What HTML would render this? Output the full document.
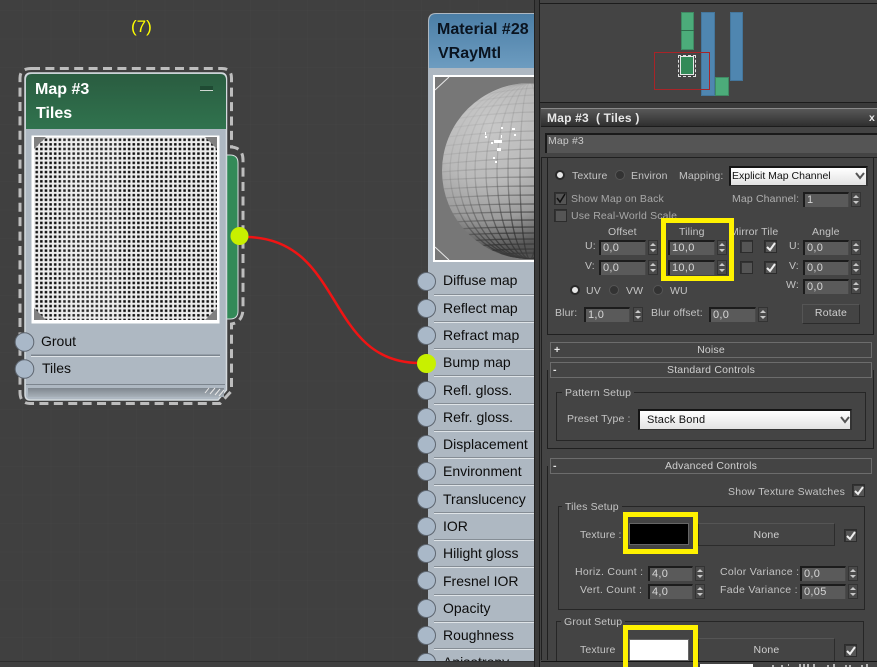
<!DOCTYPE html>
<html><head><meta charset="utf-8">
<style>
html,body{margin:0;padding:0;width:877px;height:667px;overflow:hidden;background:#404040}
body{position:relative;font-family:"Liberation Sans",sans-serif}
div,span,select{box-sizing:border-box}
.a{position:absolute}
.t{position:absolute;white-space:nowrap;font-size:10.5px;line-height:14px;color:#c4c4c4;letter-spacing:.15px}
.n{position:absolute;white-space:nowrap;font-size:14px;line-height:18px;color:#0c0c0c;left:443px;letter-spacing:0}
.s{position:absolute;width:19px;height:19px;border-radius:50%;background:#a9b8c8;border:1px solid #5e6670;left:417px}
.r{position:absolute;left:434px;width:100px;height:2px;background:linear-gradient(#858d95 50%,#dfe4e8 50%)}
.i{position:absolute;height:15px;background:#5a5a5a;border-top:2px solid #1c1c1c;border-left:2px solid #1c1c1c;border-right:1px solid #4a4a4a;font-size:11px;line-height:13px;color:#d6d6d6;padding-left:2px;letter-spacing:.3px;white-space:nowrap;overflow:hidden}
.p{position:absolute;width:10px;height:15px;background:#4a4a4a;border:1px solid #333}
.p:before,.p:after{content:"";position:absolute;left:1px;border-left:3px solid transparent;border-right:3px solid transparent}
.p:before{top:2px;border-bottom:3px solid #c8c8c8}
.p:after{bottom:2px;border-top:3px solid #c8c8c8}
.c{position:absolute;width:13px;height:13px;background:#555;border:1px solid #2c2c2c;box-shadow:inset 1px 1px 0 #333}
.c svg{position:absolute;left:0;top:0}
.b{position:absolute;border:1px solid #262626;background:transparent}
.bar{position:absolute;left:550px;width:322px;height:16px;border:1px solid #6c6c6c;background:#444;color:#d0d0d0;font-size:10.5px;line-height:14px;text-align:center;letter-spacing:.2px}
.y{position:absolute;border:5px solid #fff200}
.rd{position:absolute;width:10px;height:10px;border-radius:50%;background:#333;border:1px solid #555}
.rd.on{background:#e8e8e8;border:2px solid #2a2a2a}
</style></head>
<body>
<!-- canvas -->
<div class="a" style="left:0;top:0;width:534px;height:667px;background-color:#404040;background-image:linear-gradient(90deg,rgba(255,255,255,.012) 1px,transparent 1px),linear-gradient(rgba(255,255,255,.012) 1px,transparent 1px);background-size:28.5px 28.5px;background-position:22px 10px"></div>
<div class="a" style="left:131px;top:18px;color:#ffff00;font-size:17px;line-height:18px">(7)</div>

<!-- left node -->
<svg class="a" style="left:0;top:0" width="534" height="667" viewBox="0 0 534 667">
<defs>
<pattern id="tile" x="34" y="137" width="4.62" height="4.62" patternUnits="userSpaceOnUse">
<rect width="4.62" height="4.62" fill="#ececec"/><rect x="1.5" y="1.5" width="2.5" height="2.5" fill="#111"/>
</pattern>
<radialGradient id="sph" gradientUnits="userSpaceOnUse" cx="490" cy="125" r="125">
<stop offset="0" stop-color="#c8c8c8"/><stop offset=".45" stop-color="#bababa"/><stop offset=".75" stop-color="#9c9c9c"/><stop offset="1" stop-color="#555"/>
</radialGradient>
<linearGradient id="ls" gradientUnits="userSpaceOnUse" x1="450" y1="110" x2="534" y2="215"><stop offset="0" stop-color="#888" stop-opacity=".06"/><stop offset=".5" stop-color="#666" stop-opacity=".28"/><stop offset="1" stop-color="#333" stop-opacity=".75"/></linearGradient>
<clipPath id="sc"><rect x="435" y="77" width="99" height="184"/></clipPath>
<clipPath id="sc2"><circle cx="530" cy="171" r="88"/></clipPath>
<linearGradient id="hg" x1="0" y1="0" x2="0" y2="1"><stop offset="0" stop-color="#2a5c40"/><stop offset="1" stop-color="#30734e"/></linearGradient>
<linearGradient id="bg2" x1="0" y1="0" x2="0" y2="1"><stop offset="0" stop-color="#4b7ea6"/><stop offset="1" stop-color="#6d9cc0"/></linearGradient>
<linearGradient id="gr" x1="0" y1="0" x2="0" y2="1"><stop offset="0" stop-color="#7f878f"/><stop offset="1" stop-color="#a7b0b8"/></linearGradient>
</defs>
<path d="M31 68.500H222Q231.500 68.500 231.500 78V147Q243 148 243 160V308Q243 322 231.500 324V391L220 403.500H30Q20 403.500 20 392V78Q20 68.500 31 68.500Z" fill="none" stroke="#bdbdbd" stroke-width="3" stroke-dasharray="9 5.400"/>
<path d="M226 155H230Q238 155 238 163V311Q238 319 230 319H226Z" fill="#338a58" stroke="#d8dde0" stroke-width="1"/>
<path d="M31 73H221Q226.500 73 226.500 79V390L218 400H30Q25 400 25 394V79Q25 73 31 73Z" fill="#aeb8c2" stroke="#d4dade" stroke-width="1.500"/>
<path d="M32 74H220Q226 74 226 80V129H26V80Q26 74 32 74Z" fill="url(#hg)"/>
<rect x="200" y="86" width="13" height="4" fill="#1f4a33"/><rect x="200" y="90" width="13" height="1" fill="#cfd8d2"/>
<rect x="31.500" y="135.500" width="188" height="188" fill="#fff"/>
<rect x="34" y="137" width="183" height="183" fill="url(#tile)"/>
<rect x="60" y="137" width="60" height="183" fill="#fff" opacity=".1"/>
<path d="M34 137H46L34 149Z M217 137H205L217 149Z M34 320H46L34 308Z M217 320H205L217 308Z" fill="#808080"/>
<rect x="31" y="354.500" width="189" height="1.500" fill="#7c858e"/><rect x="31" y="356" width="189" height="1" fill="#dfe4e8"/>
<rect x="26" y="384" width="199" height="1" fill="#7c858e"/>
<rect x="28" y="388" width="196" height="9" fill="url(#gr)"/>
<path d="M205 393L209 388M210 394L215 388M215 395L220 389M219 396L224 390" stroke="#e8e8e8" stroke-width="1" fill="none"/>
<circle cx="24.500" cy="342" r="9.300" fill="#a9b8c8" stroke="#5e6670"/>
<circle cx="24.500" cy="369" r="9.300" fill="#a9b8c8" stroke="#5e6670"/>
<!-- wire -->
<path d="M248 237C345 240 325 363 420 363" fill="none" stroke="#f01414" stroke-width="2.500"/>
<circle cx="239.500" cy="236" r="9" fill="#c8f000"/>
<!-- material node -->
<path d="M534 13H436Q428 13 428 21V663H534Z" fill="#aeb8c2"/>
<path d="M534 14H436Q429 14 429 22V68H534Z" fill="url(#bg2)"/>
<rect x="433" y="75" width="101" height="187" fill="#fff"/>
<rect x="435" y="77" width="99" height="183" fill="#777"/>
<path d="M435 90L449 77M435 247L449 260" stroke="#e8e8e8" stroke-width="1"/>
<g clip-path="url(#sc)">
<circle cx="530" cy="171" r="88" fill="url(#sph)"/>
<g clip-path="url(#sc2)" fill="none" stroke="url(#ls)" stroke-width="1.300">
<ellipse cx="530" cy="171" rx="10" ry="88"/><ellipse cx="530" cy="171" rx="22" ry="88"/><ellipse cx="530" cy="171" rx="33" ry="88"/><ellipse cx="530" cy="171" rx="44" ry="88"/><ellipse cx="530" cy="171" rx="55" ry="88"/><ellipse cx="530" cy="171" rx="64" ry="88"/><ellipse cx="530" cy="171" rx="72" ry="88"/><ellipse cx="530" cy="171" rx="80" ry="88"/>
<path d="M440 172Q490 168 534 168M440 180Q490 177 534 177M441 189Q490 186 534 186M443 198Q490 195 534 195M445 206Q490 204 534 204M449 214Q490 212 534 212M453 222Q490 220 534 220M458 229Q490 227 534 227M463 235Q490 233 534 233M469 241Q490 239 534 239M476 246Q500 244 534 244M484 251Q505 249 534 249M492 255Q510 253 534 253"/>
<path d="M440 164Q490 159 534 158M441 155Q490 150 534 149M443 146Q490 141 534 140M446 137Q490 132 534 131M450 128Q490 122 534 121M455 119Q490 113 534 112M461 111Q495 104 534 103M469 103Q500 96 534 95M478 96Q505 90 534 88"/>
</g>
<path d="M442 225Q490 262 534 250V262H442Z" fill="#444" opacity=".3" clip-path="url(#sc2)"/>
<path d="M485 136h2v2h-2zM498 140h2v2h-2zM512 128h3v2h-3zM501 127h2v2h-2zM494 140h8v3h-8zM497 148h4v3h-4zM493 157h2v2h-2zM495 161h2v2h-2zM514 134h2v2h-2zM485 132h1v3h-1zM501 135h1v3h-1zM491 142h2v2h-2z" fill="#fff"/>
</g>
</svg>

<div class="a" style="left:35px;top:81px;color:#fff;font-size:16px;font-weight:bold;line-height:18px">Map #3</div>
<div class="a" style="left:36px;top:105px;color:#fff;font-size:16px;font-weight:bold;line-height:18px">Tiles</div>
<div class="a" style="left:437px;top:21px;color:#0a1420;font-size:16px;font-weight:bold;line-height:18px;white-space:nowrap;width:97px;overflow:hidden">Material #28</div>
<div class="a" style="left:438px;top:45px;color:#0a1420;font-size:16px;font-weight:bold;line-height:18px">VRayMtl</div>
<div class="n" style="left:41px;top:332px">Grout</div>
<div class="n" style="left:42px;top:359px">Tiles</div>

<div class="r" style="top:294px"></div><div class="r" style="top:321px"></div><div class="r" style="top:348px"></div><div class="r" style="top:375px"></div><div class="r" style="top:403px"></div><div class="r" style="top:430px"></div><div class="r" style="top:457px"></div><div class="r" style="top:484px"></div><div class="r" style="top:512px"></div><div class="r" style="top:539px"></div><div class="r" style="top:566px"></div><div class="r" style="top:594px"></div><div class="r" style="top:621px"></div><div class="r" style="top:648px"></div>

<div class="s" style="top:272px"></div><div class="s" style="top:299px"></div><div class="s" style="top:326px"></div>
<div class="s" style="top:354px;background:#c8f000;border-color:#c8f000"></div>
<div class="s" style="top:381px"></div><div class="s" style="top:408px"></div><div class="s" style="top:435px"></div><div class="s" style="top:462px"></div><div class="s" style="top:490px"></div><div class="s" style="top:517px"></div><div class="s" style="top:544px"></div><div class="s" style="top:571px"></div><div class="s" style="top:599px"></div><div class="s" style="top:626px"></div><div class="s" style="top:653px;height:9px;border-radius:10px 10px 0 0;border-bottom:0"></div>

<div class="n" style="top:271px">Diffuse map</div>
<div class="n" style="top:299px">Reflect map</div>
<div class="n" style="top:326px">Refract map</div>
<div class="n" style="top:353px">Bump map</div>
<div class="n" style="top:381px">Refl. gloss.</div>
<div class="n" style="top:408px">Refr. gloss.</div>
<div class="n" style="top:435px">Displacement</div>
<div class="n" style="top:462px">Environment</div>
<div class="n" style="top:490px">Translucency</div>
<div class="n" style="top:517px">IOR</div>
<div class="n" style="top:544px">Hilight gloss</div>
<div class="n" style="top:572px">Fresnel IOR</div>
<div class="n" style="top:599px">Opacity</div>
<div class="n" style="top:626px">Roughness</div>
<div class="a" style="left:434px;top:650px;width:100px;height:11px;overflow:hidden"><div class="n" style="left:9px;top:3px">Anisotropy</div></div>
<div class="a" style="left:0;top:661px;width:534px;height:6px;background:#404040;border-top:1px solid #2f2f2f"></div>

<!-- right panel -->
<div class="a" style="left:534px;top:0;width:343px;height:667px;background:#444"></div>
<div class="a" style="left:534px;top:0;width:5px;height:667px;background:#3a3a3a;border-left:1px solid #222"></div>
<div class="a" style="left:539px;top:0;width:1px;height:667px;background:#1c1c1c"></div>
<div class="a" style="left:540px;top:3px;width:337px;height:1px;background:#1c1c1c"></div>
<div class="a" style="left:540px;top:102px;width:337px;height:1px;background:#1c1c1c"></div>
<div class="a" style="left:540px;top:103px;width:337px;height:5px;background:#3a3a3a"></div>

<!-- minimap -->
<div class="a" style="left:681px;top:12px;width:13px;height:38px;background:#4cac7a;border:1px solid #3f8a63"></div>
<div class="a" style="left:681px;top:30px;width:13px;height:1px;background:#2d6e4c"></div>
<div class="a" style="left:701px;top:12px;width:14px;height:84px;background:#4f86b0;border:1px solid #44769c"></div>
<div class="a" style="left:730px;top:12px;width:13px;height:69px;background:#4f86b0;border:1px solid #44769c"></div>
<div class="a" style="left:715px;top:77px;width:14px;height:19px;background:#4cac7a;border:1px solid #3f8a63"></div>
<div class="a" style="left:654px;top:52px;width:56px;height:38px;border:1px solid #a82428"></div>
<div class="a" style="left:678px;top:55px;width:18px;height:22px;border:1px dashed #e0e0e0"></div>
<div class="a" style="left:680px;top:56px;width:14px;height:19px;background:#338a58;border:1px solid #e8e8e8"></div>

<!-- title -->
<div class="a" style="left:541px;top:108px;width:336px;height:19px;background:linear-gradient(#585858,#2f2f2f);border-top:1px solid #8a8a8a;border-bottom:1px solid #1c1c1c"></div>
<div class="t" style="left:547px;top:111px;font-weight:bold;font-size:12px;color:#e8e8e8;letter-spacing:.2px;white-space:pre">Map #3  ( Tiles )</div>
<div class="t" style="left:869px;top:111px;font-weight:bold;color:#e8e8e8">x</div>
<div class="a" style="left:545px;top:133px;width:332px;height:20px;background:#555;border-top:2px solid #1a1a1a;border-left:2px solid #1a1a1a"></div>
<div class="t" style="left:548px;top:134px;color:#c8c8c8">Map #3</div>

<!-- outer lines -->
<div class="a" style="left:541px;top:157px;width:1px;height:503px;background:#202020"></div>
<div class="a" style="left:547px;top:158px;width:1px;height:176px;background:#202020"></div>
<div class="a" style="left:547px;top:334px;width:327px;height:1px;background:#202020"></div>
<div class="a" style="left:873px;top:158px;width:1px;height:176px;background:#202020"></div>
<div class="a" style="left:541px;top:157px;width:336px;height:1px;background:#202020"></div>

<!-- top params -->
<div class="rd on" style="left:555px;top:170px"></div><div class="t" style="left:572px;top:169px">Texture</div>
<div class="rd" style="left:615px;top:170px"></div><div class="t" style="left:631px;top:169px">Environ</div>
<div class="t" style="left:679px;top:169px">Mapping:</div>
<div class="a" style="left:729px;top:166px;width:139px;height:20px;background:linear-gradient(#fff,#e2e2e2);border-top:2px solid #141414;border-left:2px solid #141414;border-right:2px solid #333;border-bottom:1px solid #333;color:#111;font-size:10.5px;line-height:17px;padding-left:1px;white-space:nowrap">Explicit Map Channel</div>
<svg class="a" style="left:855px;top:172px" width="10" height="8"><path d="M1 1L5 6L9 1" fill="none" stroke="#555" stroke-width="2"/></svg>

<div class="c" style="left:554px;top:192px"><svg width="12" height="12"><path d="M2 5L5 9L10 1" fill="none" stroke="#111" stroke-width="1.500"/></svg></div>
<div class="t" style="left:571px;top:192px;color:#a8a8a8">Show Map on Back</div>
<div class="t" style="left:732px;top:192px;color:#b0b0b0">Map Channel:</div>
<div class="i" style="left:803px;top:192px;width:46px">1</div><div class="p" style="left:851px;top:192px"></div>
<div class="c" style="left:554px;top:209px"></div>
<div class="t" style="left:571px;top:209px;color:#a8a8a8">Use Real-World Scale</div>

<div class="t" style="left:608px;top:225px">Offset</div>
<div class="t" style="left:679px;top:225px">Tiling</div>
<div class="t" style="left:730px;top:225px">Mirror Tile</div>
<div class="t" style="left:812px;top:225px">Angle</div>
<div class="t" style="left:585px;top:239px">U:</div><div class="t" style="left:585px;top:259px">V:</div>
<div class="i" style="left:599px;top:240px;width:47px">0,0</div><div class="p" style="left:648px;top:240px"></div>
<div class="i" style="left:599px;top:260px;width:47px">0,0</div><div class="p" style="left:648px;top:260px"></div>
<div class="i" style="left:668px;top:240px;width:47px">10,0</div><div class="p" style="left:717px;top:240px"></div>
<div class="i" style="left:668px;top:260px;width:47px">10,0</div><div class="p" style="left:717px;top:260px"></div>
<div class="c" style="left:740px;top:240px"></div><div class="c" style="left:740px;top:261px"></div>
<div class="c" style="left:764px;top:240px"><svg width="12" height="12"><path d="M2 6L5 9L10 2" fill="none" stroke="#eee" stroke-width="2"/></svg></div>
<div class="c" style="left:764px;top:261px"><svg width="12" height="12"><path d="M2 6L5 9L10 2" fill="none" stroke="#eee" stroke-width="2"/></svg></div>
<div class="t" style="left:789px;top:239px">U:</div><div class="t" style="left:789px;top:259px">V:</div><div class="t" style="left:786px;top:278px">W:</div>
<div class="i" style="left:803px;top:240px;width:46px">0,0</div><div class="p" style="left:851px;top:240px"></div>
<div class="i" style="left:803px;top:260px;width:46px">0,0</div><div class="p" style="left:851px;top:260px"></div>
<div class="i" style="left:803px;top:279px;width:46px">0,0</div><div class="p" style="left:851px;top:279px"></div>
<div class="y" style="left:661px;top:218px;width:73px;height:63px"></div>

<div class="rd on" style="left:570px;top:285px"></div><div class="t" style="left:586px;top:284px">UV</div>
<div class="rd" style="left:609px;top:285px"></div><div class="t" style="left:626px;top:284px">VW</div>
<div class="rd" style="left:653px;top:285px"></div><div class="t" style="left:670px;top:284px">WU</div>
<div class="t" style="left:555px;top:306px">Blur:</div>
<div class="i" style="left:584px;top:307px;width:46px">1,0</div><div class="p" style="left:633px;top:307px"></div>
<div class="t" style="left:651px;top:306px">Blur offset:</div>
<div class="i" style="left:709px;top:307px;width:47px">0,0</div><div class="p" style="left:758px;top:307px"></div>
<div class="a" style="left:802px;top:304px;width:58px;height:20px;border:1px solid #2c2c2c;border-top-color:#555;border-left-color:#555;color:#d0d0d0;font-size:10.5px;line-height:17px;text-align:center;letter-spacing:.2px">Rotate</div>

<!-- rollouts -->
<div class="bar" style="top:342px">Noise</div><div class="t" style="left:554px;top:343px;font-weight:bold;color:#e8e8e8">+</div>
<div class="bar" style="top:362px">Standard Controls</div><div class="t" style="left:553px;top:363px;font-weight:bold;color:#e8e8e8">-</div>
<div class="a" style="left:547px;top:370px;width:327px;height:79px;border:1px solid #202020;border-top:0;z-index:0"></div>
<div class="b" style="left:556px;top:392px;width:310px;height:49px"></div>
<div class="t" style="left:562px;top:386px;background:#444;padding:0 3px">Pattern Setup</div>
<div class="t" style="left:567px;top:412px">Preset Type :</div>
<div class="a" style="left:638px;top:409px;width:214px;height:21px;background:linear-gradient(#fff,#e2e2e2);border-top:2px solid #141414;border-left:2px solid #141414;border-right:2px solid #333;border-bottom:1px solid #333;color:#111;font-size:11px;line-height:18px;padding-left:7px;letter-spacing:.2px">Stack Bond</div>
<svg class="a" style="left:840px;top:416px" width="10" height="8"><path d="M1 1L5 6L9 1" fill="none" stroke="#555" stroke-width="2"/></svg>

<div class="bar" style="left:550px;top:458px">Advanced Controls</div><div class="t" style="left:553px;top:459px;font-weight:bold;color:#e8e8e8">-</div>
<div class="a" style="left:547px;top:466px;width:1px;height:194px;background:#202020"></div>
<div class="t" style="left:728px;top:485px;letter-spacing:.25px">Show Texture Swatches</div>
<div class="c" style="left:852px;top:484px"><svg width="12" height="12"><path d="M2 6L5 9L10 2" fill="none" stroke="#eee" stroke-width="2"/></svg></div>

<div class="b" style="left:558px;top:506px;width:307px;height:104px"></div>
<div class="t" style="left:562px;top:500px;background:#444;padding:0 3px">Tiles Setup</div>
<div class="t" style="left:580px;top:528px">Texture :</div>
<div class="a" style="left:629px;top:523px;width:60px;height:22px;background:#000;border:1px solid #666"></div>
<div class="a" style="left:698px;top:523px;width:137px;height:23px;border:1px solid #2c2c2c;border-top-color:#555;color:#d0d0d0;font-size:10.5px;line-height:22px;text-align:center;letter-spacing:.2px">None</div>
<div class="y" style="left:623px;top:512px;width:75px;height:42px"></div>
<div class="c" style="left:844px;top:529px"><svg width="12" height="12"><path d="M2 6L5 9L10 2" fill="none" stroke="#eee" stroke-width="2"/></svg></div>
<div class="t" style="left:575px;top:565px;letter-spacing:.3px">Horiz. Count :</div>
<div class="t" style="left:580px;top:583px;letter-spacing:.3px">Vert. Count :</div>
<div class="i" style="left:648px;top:566px;width:45px">4,0</div><div class="p" style="left:695px;top:566px"></div>
<div class="i" style="left:648px;top:584px;width:45px">4,0</div><div class="p" style="left:695px;top:584px"></div>
<div class="t" style="left:720px;top:565px;letter-spacing:.3px">Color Variance :</div>
<div class="t" style="left:720px;top:583px;letter-spacing:.3px">Fade Variance :</div>
<div class="i" style="left:800px;top:566px;width:46px">0,0</div><div class="p" style="left:848px;top:566px"></div>
<div class="i" style="left:800px;top:584px;width:46px">0,05</div><div class="p" style="left:848px;top:584px"></div>

<div class="b" style="left:556px;top:621px;width:308px;height:45px"></div>
<div class="t" style="left:561px;top:615px;background:#444;padding:0 3px 0 3px">Grout Setup</div>
<div class="t" style="left:580px;top:643px">Texture</div>
<div class="a" style="left:629px;top:639px;width:60px;height:22px;background:#fff;border:1px solid #666"></div>
<div class="a" style="left:698px;top:638px;width:137px;height:24px;border:1px solid #2c2c2c;border-top-color:#555;color:#d0d0d0;font-size:10.5px;line-height:23px;text-align:center;letter-spacing:.2px">None</div>
<div class="c" style="left:844px;top:644px"><svg width="12" height="12"><path d="M2 6L5 9L10 2" fill="none" stroke="#eee" stroke-width="2"/></svg></div>

<!-- bottom strip -->
<div class="a" style="left:541px;top:661px;width:336px;height:6px;background:#444;border-top:1px solid #141414"></div>
<div class="y" style="left:623px;top:625px;width:75px;height:47px;z-index:3"></div>
<div class="a" style="left:700px;top:664px;width:53px;height:3px;background:#fff"></div>
<svg class="a" style="left:770px;top:663px" width="107" height="4"><path d="M2 3h2M12 2v2M18 2h1M30 1v3M34 1v3M38 1v3M44 1v3M58 2v2M64 1v3M76 2v2M80 2v2M92 2v2M97 1v3" stroke="#e0e0e0" stroke-width="1.500"/></svg>
</body></html>
